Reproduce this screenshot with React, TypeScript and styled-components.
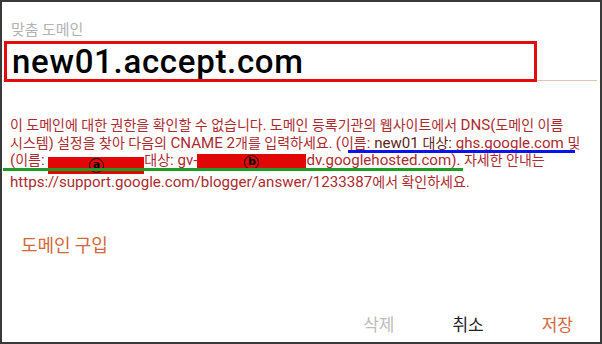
import React from "react";
import styled, { createGlobalStyle } from "styled-components";

const Global = createGlobalStyle`
  html, body { margin: 0; padding: 0; background: #fff; }
  body { font-family: Roboto, "Noto Sans CJK KR", sans-serif; }
`;

const Dialog = styled.div`
  position: relative;
  width: 602px;
  height: 344px;
  box-sizing: border-box;
  border: 2px solid #3a3a3a;
  background: #fff;
  display: flex;
  flex-direction: column;
  overflow: hidden;
`;

const Label = styled.div`
  margin: 18px 0 0 9px;
  font-family: "Noto Sans CJK KR", sans-serif;
  font-size: 15px;
  line-height: 18px;
  color: #b3b3b3;
`;

const InputField = styled.div`
  margin: 6px 3px 0 1px;
  border-bottom: 1.5px solid #dfc4b5;
  height: 37px;
  box-sizing: border-box;
`;

const InputText = styled.div`
  padding-left: 9px;
  font-family: Roboto, sans-serif;
  font-weight: 500;
  font-size: 33px;
  line-height: 36px;
  letter-spacing: 0.7px;
  color: #000;
`;

const Highlight = styled.div`
  position: absolute;
  top: 39px;
  left: 2px;
  width: 533px;
  height: 41px;
  box-sizing: border-box;
  border: 3px solid #e30b0b;
`;

const ErrorBlock = styled.div`
  position: relative;
  margin: 36px 0 0 8px;
  font-family: Roboto, "Noto Sans CJK KR", sans-serif;
  font-size: 14px;
  line-height: 17.7px;
  color: #ad2a31;
`;

const Line = styled.div`
  white-space: nowrap;
`;

const Latin = styled.span`
  font-size: 15.1px;
`;

const Dark = styled.span`
  color: #5e1f22;
`;

const Redact = styled.span<{ $w: number; $lift: number }>`
  display: inline-flex;
  align-items: center;
  justify-content: center;
  width: ${(p) => p.$w}px;
  height: 17px;
  vertical-align: ${(p) => p.$lift}px;
  background: #e20606;
`;

const Mark = styled.span`
  flex: 0 0 auto;
  display: inline-flex;
  align-items: center;
  justify-content: center;
  box-sizing: border-box;
  width: 15px;
  height: 15px;
  border: 1.8px solid #000;
  border-radius: 50%;
  color: #000;
  font-family: "DejaVu Sans", sans-serif;
  font-weight: bold;
  font-size: 11px;
  line-height: 11px;
  padding-bottom: 1px;
`;

const Rule = styled.div<{ $c: string; $l: number; $t: number; $w: number }>`
  position: absolute;
  left: ${(p) => p.$l}px;
  top: ${(p) => p.$t}px;
  width: ${(p) => p.$w}px;
  height: 3px;
  background: ${(p) => p.$c};
`;

const BuyButton = styled.div`
  margin: 42px 0 0 19px;
  font-family: "Noto Sans CJK KR", sans-serif;
  font-size: 18px;
  line-height: 21px;
  color: #d2683d;
`;

const Actions = styled.div`
  margin-top: auto;
  margin-bottom: 8px;
  display: flex;
  justify-content: flex-end;
  padding-right: 27px;
  gap: 58px;
`;

const ActionButton = styled.div<{ $tone: "muted" | "plain" | "accent" }>`
  font-family: "Noto Sans CJK KR", sans-serif;
  font-size: 17px;
  line-height: 21px;
  color: ${(p) =>
    p.$tone === "muted" ? "#bdbdbd" : p.$tone === "accent" ? "#d2683d" : "#222"};
`;

export default function App() {
  return (
    <>
      <Global />
      <Dialog>
        <Label>맞춤 도메인</Label>
        <InputField>
          <InputText>new01.accept.com</InputText>
        </InputField>
        <Highlight />
        <ErrorBlock>
          <Line>
            이 도메인에 대한 권한을 확인할 수 없습니다. 도메인 등록기관의 웹사이트에서 <Latin>DNS(</Latin>도메인 이름
          </Line>
          <Line>
            시스템) 설정을 찾아 다음의 <Latin>CNAME 2</Latin>개를 입력하세요. <Latin>(</Latin>이름<Latin>: </Latin>
            <Dark>
              <Latin>new01 </Latin>대상<Latin>:</Latin>
            </Dark>
            <Latin> ghs.google.com </Latin>및
          </Line>
          <Line>
            <Latin>(</Latin>이름<Latin>: </Latin>
            <Redact $w={96} $lift={-3}>
              <Mark>a</Mark>
            </Redact>
            대상<Latin>: gv-</Latin>
            <Redact $w={109} $lift={0}>
              <Mark>b</Mark>
            </Redact>
            <Latin>dv.googlehosted.com).</Latin> 자세한 안내는
          </Line>
          <Line>
            <Latin>https://support.google.com/blogger/answer/1233387</Latin>에서 확인하세요.
          </Line>
          <Rule $c="#0a14e6" $l={338} $t={33} $w={227} />
          <Rule $c="#1f9a22" $l={-7} $t={51} $w={460} />
        </ErrorBlock>
        <BuyButton>도메인 구입</BuyButton>
        <Actions>
          <ActionButton $tone="muted">삭제</ActionButton>
          <ActionButton $tone="plain">취소</ActionButton>
          <ActionButton $tone="accent">저장</ActionButton>
        </Actions>
      </Dialog>
    </>
  );
}
